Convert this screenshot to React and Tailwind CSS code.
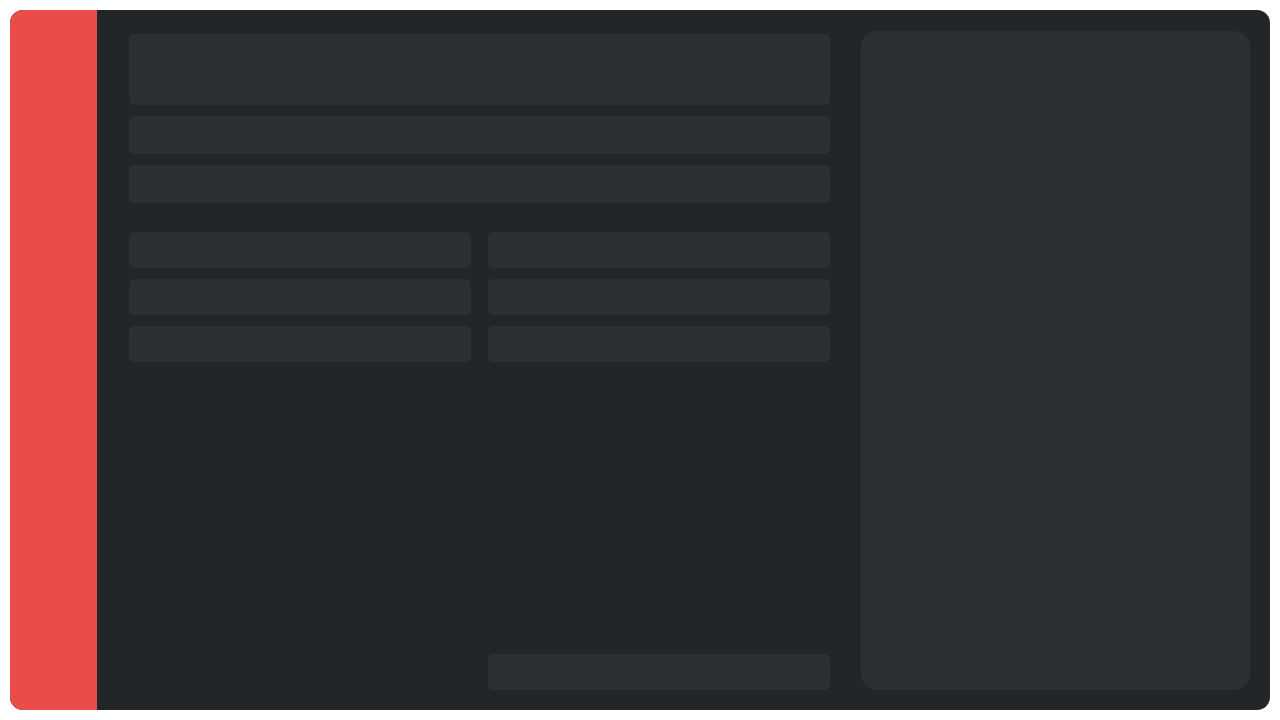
const Block = ({ className = '' }) => (
  <div className={`bg-[#2c2f33] rounded-[5px] ${className}`} />
)

const App = () => {
  return (
    <div className="w-[1280px] h-[720px] bg-white p-[10px]">
      <div className="flex h-full w-full overflow-hidden rounded-[13px] bg-[#232629]">
        <aside className="w-[87px] shrink-0 bg-[#e94d4b]" />

        <main className="flex flex-1 gap-[31px] pl-8 pr-5 pt-[21px] pb-5">
          <section className="flex w-[701px] shrink-0 flex-col pt-[3px]">
            <Block className="h-[71px]" />
            <Block className="mt-[11px] h-[38px]" />
            <Block className="mt-[11px] h-[38px]" />

            <div className="mt-[29px] grid flex-1 grid-cols-2 gap-x-[17px]">
              <div className="flex flex-col gap-[11px]">
                <Block className="h-9" />
                <Block className="h-9" />
                <Block className="h-9" />
              </div>
              <div className="flex flex-col gap-[11px]">
                <Block className="h-9" />
                <Block className="h-9" />
                <Block className="h-9" />
                <Block className="mt-auto h-9" />
              </div>
            </div>
          </section>

          <section className="flex-1 rounded-2xl bg-[#2c2f33]" />
        </main>
      </div>
    </div>
  )
}

export default App
